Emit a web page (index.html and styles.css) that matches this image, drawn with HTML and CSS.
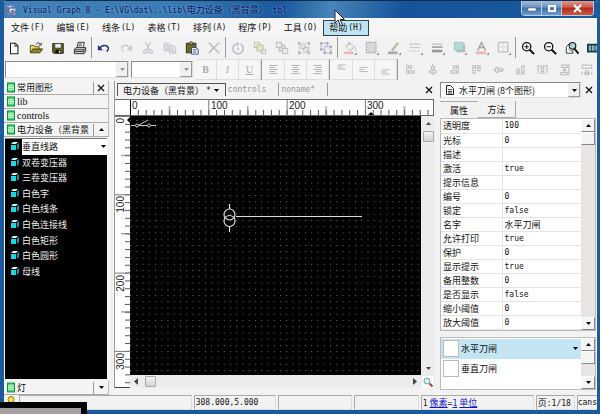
FILE: index.html
```html
<!DOCTYPE html>
<html>
<head>
    <meta charset="utf-8">
    <title>Visual Graph 8</title>
    <link rel="stylesheet" href="styles.css">
</head>
<body>
    <svg width="0" height="0" class="defs">
        <symbol id="cell" viewBox="0 0 9 11"><path d="M0 0h9v11H0z" fill="#0a8a3c"/><path d="M1 1h7v9H1z" fill="#2fd765"/><path d="M2 3h5v5H2zM2 5.500h5M4.500 3v5" fill="none" stroke="#e9ffe9"/></symbol>
        <symbol id="cube" viewBox="0 0 8 9"><path d="M0 3h5v5H0z" fill="#19d8e0"/><path d="M0 2l2-2h5L5 2z" fill="#c9ffff"/><path d="M6 2.500L8 1v5L6 8z" fill="#0b97a6"/></symbol>
        <symbol id="down" viewBox="0 0 7 7"><path d="M1 2h5L3.500 5z"/></symbol>
        <symbol id="up" viewBox="0 0 7 7"><path d="M1 5h5L3.500 2z"/></symbol>
        <symbol id="cross" viewBox="0 0 8 8"><path d="M1 1l6 6M7 1L1 7" fill="none" stroke="#111" stroke-width="1.300"/></symbol>
    </svg>

    <div class="window">
        <header class="titlebar">
            <svg class="logo" width="12" height="12" viewBox="0 0 12 12"><circle cx="6" cy="6" r="4.500" fill="#b9c4e6"/><path d="M1 5l2-3 1 2 4-2 2 2-2 1 2 3-3 3-4-1-2-2z" fill="#6874a8"/><circle cx="6.500" cy="6.500" r="2" fill="#f3f5ff"/><path d="M1 2h3M8 10h3M2 9l2 1" stroke="#e08b8b"/><circle cx="7" cy="7" r="1" fill="#3a3f77"/></svg>
            <h1><span class="lat">Visual Graph 8 - E:\VG\dat\..\lib\</span>电力设备（黑背景）<span class="lat">.tbl</span></h1>
            <div class="winbuttons">
                <button aria-label="Minimize"><svg width="10" height="9"><path d="M1 4h8v3H1z" fill="#fff" stroke="#4a5a78" stroke-width=".5"/></svg></button>
                <button aria-label="Maximize"><svg width="10" height="9"><path d="M2 2h6v5H2z" fill="none" stroke="#fff" stroke-width="2"/></svg></button>
                <button class="close" aria-label="Close"><svg width="11" height="9"><path d="M2 1l7 7M9 1L2 8" stroke="#fff" stroke-width="2.200"/></svg></button>
            </div>
        </header>

        <nav class="menubar">
            <button>文件<span class="lat">(F)</span></button>
            <button>编辑<span class="lat">(E)</span></button>
            <button>线条<span class="lat">(L)</span></button>
            <button>表格<span class="lat">(T)</span></button>
            <button>排列<span class="lat">(A)</span></button>
            <button>程序<span class="lat">(P)</span></button>
            <button>工具<span class="lat">(O)</span></button>
            <button class="hot">帮助<span class="lat">(H)</span></button>
        </nav>

        <div class="toolbar">
            <button aria-label="New"><svg viewBox="0 0 16 16"><path d="M4 2.500h5.500L12.500 5.500v9H4z" fill="#fff" stroke="#222" stroke-width="1.200"/><path d="M9 2.500V6h3.500" fill="none" stroke="#222"/></svg></button>
            <button aria-label="Open"><svg viewBox="0 0 16 16"><path d="M1.500 13V5h4l1 1.500h5V9" fill="#e9df74" stroke="#4b4810"/><path d="M1.500 13.500L4.500 9h11l-3 4.500z" fill="#8d8820" stroke="#3a380c"/><path d="M8 4c2-3 4-2 5 0m1-2v2.500h-3" fill="none" stroke="#222"/></svg></button>
            <button aria-label="Save"><svg viewBox="0 0 16 16"><path d="M2 3h12v11H3l-1-1z" fill="#6b6b18" stroke="#111"/><path d="M4.500 3h7v5h-7z" fill="#eee" stroke="#333" stroke-width=".6"/><path d="M5 10h6v4H5z" fill="#111"/><path d="M9 11h1.500v2.500H9z" fill="#fff"/></svg></button>
            <button aria-label="Print"><svg viewBox="0 0 16 16"><path d="M4.500 8L6 1.500h7L11.500 8" fill="#fff" stroke="#222"/><path d="M1.500 10l2-2.500h11V12l-2 2.500h-11z" fill="#ccc" stroke="#222"/><path d="M1.500 10h11l2-2M12.500 10v4M2 12h10M6.500 3.500h4M6 5.500h4" fill="none" stroke="#333"/></svg></button>
            <i class="sep"></i>
            <button aria-label="Undo"><svg viewBox="0 0 16 16"><path d="M3 8.500C5 4 12 4 13 8c.5 2-1 3-2 4" fill="none" stroke="#2a2f8c" stroke-width="1.700"/><path d="M1 4.500v6h6z" fill="#2a2f8c"/></svg></button>
            <button disabled aria-label="Redo"><svg viewBox="0 0 16 16"><path d="M13 8.500C11 4 4 4 3 8c-.5 2 1 3 2 4" fill="none" stroke="#c3c7d4" stroke-width="1.400"/><path d="M15 4.500v6H9z" fill="#c3c7d4"/></svg></button>
            <button disabled aria-label="Cut"><svg viewBox="0 0 16 16"><g fill="none" stroke="#b9bcc6" stroke-width="1.200"><path d="M5 1l4.500 9M11 1l-4.500 9"/><circle cx="5" cy="12" r="2"/><circle cx="11" cy="12" r="2"/></g></svg></button>
            <button disabled aria-label="Copy"><svg viewBox="0 0 16 16"><g fill="#f1f1f1" stroke="#b4b7c0"><path d="M1.500 2.500h5l2 2V11h-7z"/><path d="M7.500 5.500h5l2 2V14h-7z"/><path d="M3 5h3M3 7h4M3 9h4M9 8h3M9 10h4M9 12h4"/></g></svg></button>
            <button aria-label="Paste"><svg viewBox="0 0 16 16"><path d="M1.500 2.500h11v11h-11z" fill="#6f6d1c" stroke="#222"/><path d="M4 3.500L6 1h2l2 2.500z" fill="#ddd" stroke="#222"/><path d="M7.500 7.500h5l2.500 2V15H7.500z" fill="#fff" stroke="#24309b"/><path d="M9 10h4M9 12.500h4" stroke="#24309b"/></svg></button>
            <button disabled aria-label="Delete"><svg viewBox="0 0 16 16"><path d="M2 2l12 12M14 2C9 6 5 10 2 14" fill="none" stroke="#b5b7bf" stroke-width="1.500"/></svg></button>
            <i class="sep"></i>
            <button disabled aria-label="Rotate"><svg viewBox="0 0 16 16"><path d="M5 3.500a6 6 0 1 0 6 0" fill="none" stroke="#b3bcc9" stroke-width="1.700"/><path d="M6 1l4 2.500L6 6z" fill="#b3bcc9"/><circle cx="8" cy="9" r="1.500" fill="#c5cbd5"/></svg></button>
            <button disabled aria-label="Bring to front"><svg viewBox="0 0 16 16"><g stroke="#b8b8ac"><path d="M1.500 1.500h6v6h-6zM9.500 9.500h5v5h-5z" fill="#eeeee6"/><path d="M4.500 4.500h7v7h-7z" fill="#e4e5bb"/></g></svg></button>
            <button disabled aria-label="Send to back"><svg viewBox="0 0 16 16"><g stroke="#b4b4b0"><path d="M4.500 4.500h7v7h-7z" fill="#e3e4c4"/><path d="M1.500 1.500h6v6h-6zM8.500 8.500h6v6h-6z" fill="#ebebe8"/></g></svg></button>
            <button disabled aria-label="Group"><svg viewBox="0 0 16 16"><g fill="none" stroke="#b6b8c2"><path d="M2.500 2.500h11v11h-11z" stroke-dasharray="2 1"/><path d="M4.500 4.500h5v4h-5zM7.500 7.500h5v4h-5z"/></g><path d="M1 1h3v3H1zM12 1h3v3h-3zM1 12h3v3H1zM12 12h3v3h-3z" fill="#b6b8c2"/></svg></button>
            <button disabled aria-label="Ungroup"><svg viewBox="0 0 16 16"><g fill="#eceef4" stroke="#aeb1c0"><path d="M2.500 2.500h7v7h-7z"/><path d="M6.500 6.500h7v7h-7z"/></g><path d="M1 1h3v3H1zM8 1h3v3H8zM1 8h3v3H1zM12 5h3v3h-3zM5 12h3v3H5zM12 12h3v3h-3z" fill="#aeb1c0"/></svg></button>
            <i class="sep"></i>
            <button disabled aria-label="Fill"><svg viewBox="0 0 16 16"><path d="M3 6l5-4 5 5-5 4z" fill="#eee" stroke="#b4b6bd"/><path d="M7 5V1M13 7c2 1 2 3 1 4" fill="none" stroke="#a7b3c2"/><path d="M1 12h11v3H1z" fill="#edb7b7"/><path d="M16 13v3h-3z" fill="#888"/></svg></button>
            <button disabled aria-label="Hatch"><svg viewBox="0 0 16 16"><path d="M1.500 1.500h11v12h-11z" fill="#efefef" stroke="#a8a8a8"/><path d="M2 5l3-3M2 8l6-6M2 11l9-9M3 13l9-9M6 13l6-6M9 13l3-3" stroke="#aaa"/><path d="M16 13v3h-3z" fill="#888"/></svg></button>
            <button disabled aria-label="Pen"><svg viewBox="0 0 16 16"><path d="M5 10l7-8 1 1-6 8z" fill="#d8cfae" stroke="#aaa696"/><path d="M1 12h11v3H1z" fill="#a8a8a8"/><path d="M16 13v3h-3z" fill="#888"/></svg></button>
            <button disabled aria-label="Dashes"><svg viewBox="0 0 16 16"><path d="M1 3.500h12" stroke="#aaa" stroke-dasharray="4 1"/><path d="M1 7.500h12" stroke="#aaa" stroke-dasharray="2 1"/><path d="M1 11.500h12" stroke="#aaa" stroke-dasharray="1 1"/><path d="M16 13v3h-3z" fill="#888"/></svg></button>
            <button disabled aria-label="Line width"><svg viewBox="0 0 16 16"><path d="M1 3.500h12" stroke="#aaa"/><path d="M1 7h12" stroke="#a5a5a5" stroke-width="2"/><path d="M1 11.500h12" stroke="#999" stroke-width="3"/><path d="M16 13v3h-3z" fill="#888"/></svg></button>
            <button disabled aria-label="Shadow"><svg viewBox="0 0 16 16"><path d="M4 4h10v9H4z" fill="#b5bcbc"/><path d="M1.500 1.500h10v9h-10z" fill="#b4d9d7" stroke="#9fc0bf"/><path d="M16 13v3h-3z" fill="#888"/></svg></button>
            <button disabled aria-label="Font colour"><svg viewBox="0 0 16 16"><path d="M3 11L7.500 1.500L12 11M4.500 7.500h6" fill="none" stroke="#a4a4a8" stroke-width="1.600"/><path d="M1 12h12v3H1z" fill="#edb3b3"/><path d="M16 13v3h-3z" fill="#888"/></svg></button>
            <button disabled aria-label="Border"><svg viewBox="0 0 16 16"><path d="M1.500 1.500h11v11h-11z" fill="none" stroke="#aaa"/><path d="M7 2v10M2 7h10" stroke="#c4c4c4" stroke-dasharray="1 1"/><path d="M16 13v3h-3z" fill="#888"/></svg></button>
            <i class="sep"></i>
            <button aria-label="Zoom in"><svg viewBox="0 0 16 16"><circle cx="6.500" cy="6.500" r="4.700" fill="#fff" stroke="#111" stroke-width="1.500"/><path d="M4 6.500h5M6.500 4v5" stroke="#111" stroke-width="1.200"/><path d="M10 10l5 5" stroke="#111" stroke-width="2.400"/></svg></button>
            <button aria-label="Zoom out"><svg viewBox="0 0 16 16"><circle cx="6.500" cy="6.500" r="4.700" fill="#fff" stroke="#111" stroke-width="1.500"/><path d="M4 6.500h5" stroke="#111" stroke-width="1.200"/><path d="M10 10l5 5" stroke="#111" stroke-width="2.400"/></svg></button>
            <button aria-label="Zoom page"><svg viewBox="0 0 16 16"><path d="M1.500 6.500L5 3h4v11H1.500z" fill="#fff" stroke="#233"/><circle cx="8.500" cy="5.500" r="3.800" fill="#a9d3d3" stroke="#222" stroke-width="1.400"/><path d="M11 9l4.500 5.500" stroke="#111" stroke-width="2.200"/><path d="M4 9l4 3" stroke="#355"/></svg></button>
            <button aria-label="Fit"><svg viewBox="0 0 16 16"><path d="M0 3h16v10H0z" fill="#173c46"/><path d="M2 5h12v6H2z" fill="#8fb6ba"/><path d="M5 4v8M9 4v8" stroke="#173c46"/></svg></button>
        </div>

        <div class="toolbar format">
            <span class="combo font"><select aria-label="Font"><option></option></select><span class="arrow"><svg width="7" height="7" fill="#999"><use href="#down"/></svg></span></span>
            <span class="combo size"><select aria-label="Size"><option></option></select><span class="arrow"><svg width="7" height="7" fill="#999"><use href="#down"/></svg></span></span>
            <button disabled class="boxed b">B</button>
            <button disabled class="boxed it">I</button>
            <button disabled class="boxed u">U</button>
            <i class="sep"></i>
            <button disabled class="boxed" aria-label="Left"><svg viewBox="0 0 16 16"><path d="M3 3h10M3 5.500h7M3 8h10M3 10.500h7M3 13h10" stroke="#aaa" stroke-width="1.100"/></svg></button>
            <button disabled class="boxed" aria-label="Center"><svg viewBox="0 0 16 16"><path d="M3 3h10M5 5.500h6M3 8h10M5 10.500h6M3 13h10" stroke="#aaa" stroke-width="1.100"/></svg></button>
            <button disabled class="boxed" aria-label="Right"><svg viewBox="0 0 16 16"><path d="M3 3h10M6 5.500h7M3 8h10M6 10.500h7M3 13h10" stroke="#aaa" stroke-width="1.100"/></svg></button>
            <i class="sep"></i>
            <button disabled class="boxed" aria-label="Top"><svg viewBox="0 0 16 16"><path d="M3 2.500h10M3 5h6M3 7.500h10" stroke="#aaa"/></svg></button>
            <button disabled class="boxed" aria-label="Middle"><svg viewBox="0 0 16 16"><path d="M3 5.500h10M3 8h6M3 10.500h10" stroke="#aaa"/></svg></button>
            <button disabled class="boxed" aria-label="Bottom"><svg viewBox="0 0 16 16"><path d="M3 8.500h10M3 11h6M3 13.500h10" stroke="#aaa"/></svg></button>
            <i class="sep"></i>
            <button disabled aria-label="Align left"><svg viewBox="0 0 16 16"><path d="M3.500 2v12M5.500 3.500h4v3h-4zM5.500 9.500h7v3h-7z" fill="none" stroke="#aaa"/></svg></button>
            <button disabled aria-label="Align center"><svg viewBox="0 0 16 16"><path d="M8.500 1v3M8.500 12v3M6.500 4.500h4v3h-4zM4.500 9.500h8v3h-8z" fill="none" stroke="#aaa"/></svg></button>
            <button disabled aria-label="Align right"><svg viewBox="0 0 16 16"><path d="M12.500 2v12M6.500 3.500h4v3h-4zM3.500 9.500h7v3h-7z" fill="none" stroke="#aaa"/></svg></button>
            <button disabled aria-label="Align top"><svg viewBox="0 0 16 16"><path d="M2 3.500h12M3.500 5.500h3v7h-3zM9.500 5.500h3v4h-3z" fill="none" stroke="#aaa"/></svg></button>
            <button disabled aria-label="Align middle"><svg viewBox="0 0 16 16"><path d="M1 8.500h3M12 8.500h3M4.500 5.500h3v6h-3zM9.500 6.500h3v4h-3z" fill="none" stroke="#aaa"/></svg></button>
            <button disabled aria-label="Align bottom"><svg viewBox="0 0 16 16"><path d="M2 13.500h12M3.500 7.500h3v4h-3zM9.500 3.500h3v8h-3z" fill="none" stroke="#aaa"/></svg></button>
            <button disabled aria-label="Space across"><svg viewBox="0 0 16 16"><path d="M1 3.500h14M2.500 4v9M6.500 5.500h3v5h-3zM13.500 4v9M5 12.500h6" fill="none" stroke="#aaa"/></svg></button>
            <button disabled aria-label="Space down"><svg viewBox="0 0 16 16"><path d="M13.500 1v14M4.500 2.500h7v3h-7zM6.500 7.500h3v2h-3zM3.500 11.500h8v3h-8z" fill="none" stroke="#aaa"/></svg></button>
            <button disabled aria-label="Same size"><svg viewBox="0 0 16 16"><path d="M2.500 2.500h12v4h-12zM2.500 10.500v4M14.500 10.500v4M5 12.500h7M6.500 9.500h4v5h-4z" fill="none" stroke="#aaa"/></svg></button>
        </div>

        <main class="workspace">
            <aside class="library">
                <div class="drawer"><svg width="8" height="11"><use href="#cell"/></svg><span>常用图形</span><button aria-label="Close"><svg width="8" height="8"><use href="#cross"/></svg></button></div>
                <div class="drawer serif"><svg width="8" height="11"><use href="#cell"/></svg><span>lib</span></div>
                <div class="drawer serif"><svg width="8" height="11"><use href="#cell"/></svg><span>controls</span></div>
                <div class="drawer"><svg width="8" height="11"><use href="#cell"/></svg><span>电力设备（黑背景</span><button aria-label="Up"><svg width="7" height="7"><use href="#up"/></svg></button></div>
                <div class="shapes">
                    <ul>
                        <li class="current"><svg width="8" height="9"><use href="#cube"/></svg><span>垂直线路</span><svg class="more" width="7" height="7"><use href="#down"/></svg></li>
                        <li><svg width="8" height="9"><use href="#cube"/></svg><span>双卷变压器</span></li>
                        <li><svg width="8" height="9"><use href="#cube"/></svg><span>三卷变压器</span></li>
                        <li><svg width="8" height="9"><use href="#cube"/></svg><span>白色字</span></li>
                        <li><svg width="8" height="9"><use href="#cube"/></svg><span>白色线条</span></li>
                        <li><svg width="8" height="9"><use href="#cube"/></svg><span>白色连接线</span></li>
                        <li><svg width="8" height="9"><use href="#cube"/></svg><span>白色矩形</span></li>
                        <li><svg width="8" height="9"><use href="#cube"/></svg><span>白色圆形</span></li>
                        <li><svg width="8" height="9"><use href="#cube"/></svg><span>母线</span></li>
                    </ul>
                </div>
                <div class="drawer"><svg width="8" height="11"><use href="#cell"/></svg><span>灯</span><button aria-label="Down"><svg width="7" height="7"><use href="#down"/></svg></button></div>
            </aside>

            <section class="editor">
                <div class="tabs">
                    <button class="active">电力设备（黑背景）<span class="lat">*</span><svg width="7" height="7"><use href="#down"/></svg></button>
                    <button class="lat">controls</button>
                    <button class="lat">noname*</button>
                    <button class="x" aria-label="Close"><svg width="8" height="8"><use href="#cross"/></svg></button>
                </div>
                <div class="hruler">
                    <svg width="100%" height="15">
                        <defs>
                            <pattern id="hs" width="7.830" height="15" patternUnits="userSpaceOnUse" x="15"><path d="M.5 10v5" stroke="#555"/></pattern>
                            <pattern id="hm" width="78.300" height="15" patternUnits="userSpaceOnUse" x="15"><path d="M.5 0v15M39.500 6v9" stroke="#777"/></pattern>
                        </defs>
                        <rect x="15" width="100%" height="15" fill="url(#hs)"/>
                        <rect x="15" width="100%" height="15" fill="url(#hm)"/>
                        <path d="M15.500 0v15" stroke="#000"/>
                        <text x="17" y="9">0</text><text x="96" y="9">100</text><text x="174" y="9">200</text><text x="252" y="9">300</text>
                        <path d="M253 15l3-3 3 3z"/>
                    </svg>
                </div>
                <div class="stage">
                    <div class="vruler">
                        <svg width="15" height="100%">
                            <defs>
                                <pattern id="vs" width="15" height="7.830" patternUnits="userSpaceOnUse"><path d="M10 .5h5" stroke="#555"/></pattern>
                                <pattern id="vm" width="15" height="78.300" patternUnits="userSpaceOnUse"><path d="M0 .5h15M6 39.500h9" stroke="#777"/></pattern>
                            </defs>
                            <rect width="15" height="100%" fill="url(#vs)"/>
                            <rect width="15" height="100%" fill="url(#vm)"/>
                            <g text-anchor="end"><text transform="translate(9 2) rotate(-90)">0</text><text transform="translate(9 80) rotate(-90)">100</text><text transform="translate(9 159) rotate(-90)">200</text><text transform="translate(9 237) rotate(-90)">300</text></g>
                            <path d="M15 1l-3 3 3 3z"/>
                        </svg>
                    </div>
                    <div class="view">
                        <svg class="canvas" width="100%" height="100%">
                            <defs><pattern id="dots" width="6.250" height="6.250" patternUnits="userSpaceOnUse" y="4"><rect x="0" y="0" width="1" height="1" fill="#6c6c6c"/></pattern></defs>
                            <rect width="100%" height="100%" fill="url(#dots)"/>
                            <g fill="none" stroke="#ccc">
                                <path d="M1 9.500h4M9 9l9-5M9 9.500h8M21 9.500h5"/>
                                <circle cx="7" cy="9.500" r="1.500"/><circle cx="19" cy="9.500" r="1.500"/>
                            </g>
                            <g fill="none" stroke="#ddd" stroke-width="1.200">
                                <circle cx="99.500" cy="98.500" r="5.500"/><circle cx="99.500" cy="105" r="5.500"/>
                                <path d="M99.500 88v5M99.500 111v5M106 100.500h126"/>
                            </g>
                        </svg>
                        <div class="hscroll"><svg width="7" height="7"><path d="M5 0v7L1 3.500z"/></svg><i></i><svg class="end" width="7" height="7"><path d="M2 0v7l4-3.500z"/></svg></div>
                    </div>
                    <div class="vscroll">
                        <svg width="7" height="7"><use href="#up"/></svg><i></i>
                        <svg class="end" width="7" height="7"><use href="#down"/></svg>
                        <svg class="lens" width="12" height="12"><circle cx="5" cy="5" r="3" fill="#d4f3ef" stroke="#6aa5a5"/><path d="M7.500 7.500l3 3" stroke="#b33" stroke-width="2"/></svg>
                    </div>
                </div>
            </section>

            <aside class="inspector">
                <div class="object">
                    <span class="combo">
                        <svg width="9" height="12"><path d="M1.500 1.500h4l3 3v6h-7z" fill="#fff" stroke="#222"/><path d="M3 5.500h4M3 7.500h4M3 9h4" stroke="#444"/></svg>
                        <select aria-label="Object"><option>水平刀闸 (8个图形)</option></select>
                        <span class="arrow"><svg width="7" height="7"><use href="#down"/></svg></span>
                    </span>
                    <button aria-label="Close"><svg width="8" height="8"><use href="#cross"/></svg></button>
                </div>
                <div class="pages"><button class="active">属性</button><button>方法</button></div>
                <div class="grid">
                    <table>
                        <tr><th>透明度</th><td class="lat">100</td></tr>
                        <tr><th>光标</th><td class="lat">0</td></tr>
                        <tr><th>描述</th><td></td></tr>
                        <tr><th>激活</th><td class="lat">true</td></tr>
                        <tr><th>提示信息</th><td></td></tr>
                        <tr><th>编号</th><td class="lat">0</td></tr>
                        <tr><th>锁定</th><td class="lat">false</td></tr>
                        <tr><th>名字</th><td>水平刀闸</td></tr>
                        <tr><th>允许打印</th><td class="lat">true</td></tr>
                        <tr><th>保护</th><td class="lat">0</td></tr>
                        <tr><th>显示提示</th><td class="lat">true</td></tr>
                        <tr><th>备用整数</th><td class="lat">0</td></tr>
                        <tr><th>是否显示</th><td class="lat">false</td></tr>
                        <tr><th>缩小阈值</th><td class="lat">0</td></tr>
                        <tr><th>放大阈值</th><td class="lat">0</td></tr>
                    </table>
                    <div class="scroll"><button aria-label="Up"><svg width="7" height="7"><use href="#up"/></svg></button><i></i><button class="end" aria-label="Down"><svg width="7" height="7"><use href="#down"/></svg></button></div>
                </div>
                <div class="states">
                    <ul>
                        <li class="current"><i></i><span>水平刀闸</span><svg class="more" width="7" height="7"><use href="#down"/></svg></li>
                        <li><i></i><span>垂直刀闸</span></li>
                    </ul>
                    <div class="scroll"><button aria-label="Up"><svg width="7" height="7"><use href="#up"/></svg></button><i></i><button class="end" aria-label="Down"><svg width="7" height="7"><use href="#down"/></svg></button></div>
                </div>
            </aside>
        </main>

        <footer class="statusbar">
            <span class="tip"><svg width="8" height="10"><circle cx="4" cy="4.500" r="3" fill="#ffe93a" stroke="#8a7a10"/></svg></span>
            <span class="message"></span>
            <span class="lat pos">308.000,5.000</span>
            <span class="blank"></span>
            <span class="blank narrow"></span>
            <span class="scale"><span class="lat">1</span> <a href="#">像素</a><span class="lat">=</span><a href="#" class="lat">1</a> <a href="#">单位</a></span>
            <span class="page">页<span class="lat">:1/18</span></span>
            <span class="lat name">cans</span>
        </footer>
    </div>

    <div class="corner"></div>
    <svg class="pointer" width="12" height="18" viewBox="0 0 12 18"><path d="M1 1v13l3-3 2.500 6 2-1L6 10.500h4.500z" fill="#fff" stroke="#223"/></svg>
</body>
</html>
```
FILE: styles.css
```css
* {
    box-sizing: border-box;
}

body {
    margin: 0;
    height: 100vh;
    overflow: hidden;
    background: #1c5a94;
    color: #111;
    font: 9px/13px "Noto Sans CJK SC", sans-serif;
}

button {
    display: flex;
    align-items: center;
    justify-content: center;
    padding: 0;
    border: 0;
    background: none;
    color: inherit;
    font: inherit;
    white-space: nowrap;
}

svg {
    display: block;
    flex: none;
}

i {
    display: block;
    flex: none;
}

ul {
    list-style: none;
    margin: 0;
    padding: 0;
}

.defs {
    position: absolute;
}

.lat,
.tabs .lat {
    font-family: "DejaVu Sans Mono", monospace;
    font-size: 8px;
}

.window {
    display: flex;
    flex-direction: column;
    height: 100vh;
    border: solid #1c5a9c;
    border-width: 0 3px 4px 4px;
    border-radius: 5px 5px 0 0;
    background: #f2f2f2;
    overflow: hidden;
}

/* title bar */
.titlebar {
    display: flex;
    align-items: center;
    height: 18px;
    margin: 0 -3px 0 -4px;
    padding: 0 6px 0 5px;
    border-top: 1px solid #0d2c4d;
    background: linear-gradient(100deg, #4281b8 0%, #3a7cb6 28%, #19599c 47%, #4884b8 55%, #15549a 67%, #1a5a9f 100%);
}

.titlebar h1 {
    flex: 1;
    margin: 0 0 0 6px;
    font-size: 9px;
    font-weight: normal;
    color: #08145c;
    text-shadow: 0 0 3px #8fbbe8;
    white-space: nowrap;
}

.winbuttons {
    display: flex;
    align-self: flex-start;
    height: 15px;
    border: 1px solid #b9cde4;
    border-top: 0;
    border-radius: 0 0 4px 4px;
    overflow: hidden;
}

.winbuttons button {
    width: 20px;
    background: linear-gradient(#a3bdd9, #6d91b9 45%, #3f6ea5 50%, #6b9ccb);
    border-right: 1px solid #b9cde4;
}

.winbuttons .close {
    width: 31px;
    border: 0;
    background: linear-gradient(#dd9c93, #c9564a 45%, #b02a1c 50%, #cf5540);
}

/* menu */
.menubar {
    display: flex;
    align-items: center;
    height: 19px;
    padding: 0 1px;
    background: #f5f5f5;
}

.menubar button {
    height: 16px;
    padding: 0 6px;
}

.menubar .lat {
    margin-left: 1px;
}

.menubar .hot {
    background: #bfe3f0;
    border: 1px solid #2b4350;
    padding: 0 5px;
}

/* toolbars */
.toolbar {
    display: flex;
    align-items: center;
    height: 21px;
    margin-left: -1px;
    overflow: hidden;
}

.toolbar button {
    flex: none;
    width: 22px;
    height: 20px;
}

.toolbar button svg {
    width: 14px;
    height: 14px;
}

.toolbar .sep {
    width: 2px;
    height: 21px;
    border-left: 1px solid #999;
}

.format {
    height: 22px;
    padding-left: 2px;
}

.format .boxed {
    height: 21px;
    border: 1px solid #dedede;
    border-left: 0;
    background: #f6f6f6;
    color: #aaa;
    font: 10px "Liberation Serif", serif;
}

.format .b {
    font-weight: bold;
}

.format .it {
    font-style: italic;
}

.format .u {
    text-decoration: underline;
}

.format button svg {
    width: 13px;
    height: 13px;
}

.combo {
    position: relative;
    display: flex;
    align-items: center;
    height: 17px;
    margin-right: 2px;
    border: 1px solid #8a8a8a;
    border-right-color: #ddd;
    border-bottom-color: #ddd;
    background: #fff;
}

.font {
    width: 125px;
}

.size {
    width: 62px;
}

.combo select {
    flex: 1;
    width: 0;
    height: 100%;
    padding: 0;
    border: 0;
    background: none;
    appearance: none;
    font: inherit;
    color: inherit;
}

.arrow {
    display: flex;
    align-items: center;
    justify-content: center;
    width: 12px;
    height: 100%;
    border: 1px solid #999;
    border-top-color: #eee;
    border-left-color: #eee;
    background: #f0f0f0;
    pointer-events: none;
}

/* workspace */
.workspace {
    flex: 1;
    display: flex;
    gap: 5px;
    min-height: 0;
    padding-top: 1px;
}

/* library */
.library {
    display: flex;
    flex-direction: column;
    width: 105px;
}

.drawer {
    display: flex;
    align-items: center;
    height: 14px;
    padding-left: 3px;
    border-bottom: 1px solid #aaa;
    border-right: 1px solid #bbb;
    background: #f4f4f4;
    white-space: nowrap;
}

.drawer span {
    flex: 1;
    margin-left: 2px;
    overflow: hidden;
}

.drawer button {
    width: 15px;
    height: 12px;
    border-left: 1px solid #999;
}

.serif {
    font: 10px/12px "Liberation Serif", serif;
}

.shapes {
    flex: 1;
    margin: 1px 2px 2px 1px;
    border-top: 1px solid #777;
    background: #000;
    color: #eee;
}

.shapes ul {
    display: grid;
    grid-template-rows: repeat(9, 1fr);
    height: 140px;
}

.shapes li {
    display: flex;
    align-items: center;
    padding-left: 6px;
}

.shapes span {
    margin-left: 3px;
}

.shapes .current {
    background: linear-gradient(90deg, #000 17px, #fff 17px);
    color: #111;
}

.more {
    margin-left: auto;
}

/* editor */
.editor {
    flex: 1;
    display: flex;
    flex-direction: column;
    min-width: 0;
    margin-bottom: 7px;
    border-left: 1px solid #999;
}

.tabs {
    display: flex;
    align-items: flex-end;
    height: 18px;
    padding: 2px 0 3px 2px;
}

.tabs button {
    height: 13px;
    padding: 0 12px 0 2px;
    border-right: 1px solid #999;
    color: #999;
}

.tabs .active {
    gap: 2px;
    padding: 0 5px;
    border: 1px solid #555;
    border-bottom: 0;
    color: #111;
}

.tabs .x {
    width: 12px;
    margin-left: auto;
    padding: 0;
    border: 0;
}

.hruler {
    height: 17px;
    margin-right: 1px;
    border: 1px solid #666;
    border-left: 0;
    background: #fff;
}

.editor text {
    font: 10px "Liberation Sans", sans-serif;
    fill: #222;
}

.stage {
    flex: 1;
    display: flex;
    min-height: 0;
}

.vruler {
    width: 15px;
    border-bottom: 1px solid #444;
    background: #fff;
}

.vruler svg {
    overflow: hidden;
}

.view {
    flex: 1;
    display: flex;
    flex-direction: column;
    min-width: 0;
}

.canvas {
    flex: 1;
    min-height: 0;
    background: #000;
}

.hscroll {
    display: flex;
    align-items: center;
    gap: 5px;
    height: 13px;
    padding: 0 3px;
    background: #ececee;
    fill: #444;
}

.hscroll i,
.vscroll i {
    width: 11px;
    height: 11px;
    border: 1px solid #aaa;
    border-radius: 1px;
    background: linear-gradient(#f4f4f4, #d2d2d4);
}

.hscroll .end {
    margin-left: auto;
}

.vscroll {
    display: flex;
    flex-direction: column;
    align-items: center;
    gap: 4px;
    width: 14px;
    padding-top: 4px;
    background: #ececee;
    fill: #444;
}

.vscroll .end {
    margin-top: auto;
}

.lens {
    background: #fff;
}

/* inspector */
.inspector {
    display: flex;
    flex-direction: column;
    width: 157px;
}

.object {
    display: flex;
    align-items: center;
    height: 18px;
    padding-right: 2px;
}

.object .combo {
    width: 142px;
    height: 16px;
    padding-left: 4px;
}

.object select {
    margin-left: 5px;
}

.object button {
    margin-left: auto;
    width: 12px;
}

.pages {
    display: flex;
    height: 19px;
    padding-top: 2px;
}

.pages button {
    width: 38px;
    border-right: 1px solid #aaa;
    border-bottom: 1px solid #aaa;
}

.pages .active {
    border-top: 1px solid #aaa;
    border-right: 0;
    border-bottom: 0;
}

.grid,
.states {
    display: flex;
    margin-right: 1px;
    border: 1px solid #bbb;
    background: #fff;
}

table {
    flex: 1;
    align-self: flex-start;
    border-collapse: collapse;
    table-layout: fixed;
}

th,
td {
    height: 14px;
    padding: 0 0 0 2px;
    border-bottom: 1px solid #e4e4e4;
    line-height: 13px;
    text-align: left;
    font-weight: normal;
}

th {
    width: 61px;
    border-right: 1px solid #e4e4e4;
}

.scroll {
    display: flex;
    flex-direction: column;
    width: 14px;
    background: #e6e5e2;
}

.scroll button,
.scroll i {
    height: 13px;
    border: 1px solid #888;
    border-top-color: #fff;
    border-left-color: #fff;
    background: #f4f4f4;
}

.scroll .end {
    margin-top: auto;
}

.states {
    height: 53px;
    margin-top: 6px;
}

.states ul {
    flex: 1;
    padding-top: 1px;
}

.states li {
    display: flex;
    align-items: center;
    height: 20px;
    padding: 0 2px;
}

.states li i {
    width: 16px;
    height: 17px;
    border: 1px solid #bbb;
    background: #fff;
}

.states li span {
    margin-left: 2px;
}

.states .current {
    background: #c3e5f2;
}

/* status bar */
.statusbar {
    display: flex;
    gap: 2px;
    height: 15px;
    overflow: hidden;
    white-space: nowrap;
}

.statusbar > span {
    flex: none;
    padding-left: 1px;
    border: 1px solid #aaa;
    border-right-color: #ddd;
    border-bottom-color: #ddd;
}

.statusbar .tip {
    width: 13px;
    padding-left: 3px;
    border: 0;
}

.statusbar .message {
    flex: 1;
}

.pos {
    width: 82px;
    line-height: 13px;
}

.blank {
    width: 74px;
}

.narrow {
    width: 65px;
}

.scale {
    width: 113px;
}

.page {
    width: 39px;
}

.statusbar .name {
    padding-left: 0;
    border-right: 0;
}

a {
    color: #1414d8;
}

/* things floating above the window */
.corner {
    position: absolute;
    left: 0;
    bottom: 0;
    width: 87px;
    height: 12px;
    border: solid #000;
    border-width: 6px 6px 0 0;
    background: #a5a09f;
}

.pointer {
    position: absolute;
    left: 334px;
    top: 9px;
}
```
